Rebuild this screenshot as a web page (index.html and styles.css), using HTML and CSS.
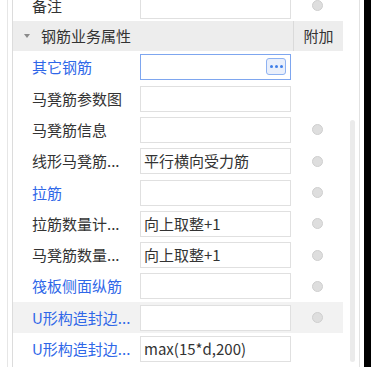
FILE: index.html
```html
<!DOCTYPE html>
<html lang="zh-CN">
<head>
    <meta charset="UTF-8">
    <title>钢筋业务属性</title>
    <link rel="stylesheet" href="styles.css">
</head>
<body>
    <div class="window">
        <div class="outer">
            <div class="grid">
                <div class="row">
                    <div class="label">备注</div>
                    <div class="box"></div>
                    <div class="extra"><span class="radio"></span></div>
                </div>
                <div class="head">
                    <div class="head-title"><span class="caret"></span>钢筋业务属性</div>
                    <div class="head-extra">附加</div>
                </div>
                <div class="row">
                    <div class="label blue">其它钢筋</div>
                    <div class="box active"><span class="more"><i></i><i></i><i></i></span></div>
                    <div class="extra"></div>
                </div>
                <div class="row">
                    <div class="label">马凳筋参数图</div>
                    <div class="box"></div>
                    <div class="extra"></div>
                </div>
                <div class="row">
                    <div class="label">马凳筋信息</div>
                    <div class="box"></div>
                    <div class="extra"><span class="radio"></span></div>
                </div>
                <div class="row">
                    <div class="label">线形马凳筋...</div>
                    <div class="box">平行横向受力筋</div>
                    <div class="extra"><span class="radio"></span></div>
                </div>
                <div class="row">
                    <div class="label blue">拉筋</div>
                    <div class="box"></div>
                    <div class="extra"><span class="radio"></span></div>
                </div>
                <div class="row">
                    <div class="label">拉筋数量计...</div>
                    <div class="box">向上取整+1</div>
                    <div class="extra"><span class="radio"></span></div>
                </div>
                <div class="row">
                    <div class="label">马凳筋数量...</div>
                    <div class="box">向上取整+1</div>
                    <div class="extra"><span class="radio"></span></div>
                </div>
                <div class="row">
                    <div class="label blue">筏板侧面纵筋</div>
                    <div class="box"></div>
                    <div class="extra"><span class="radio"></span></div>
                </div>
                <div class="row hover">
                    <div class="label blue">U形构造封边...</div>
                    <div class="box"></div>
                    <div class="extra"><span class="radio"></span></div>
                </div>
                <div class="row">
                    <div class="label blue">U形构造封边...</div>
                    <div class="box">max(15*d,200)</div>
                    <div class="extra"></div>
                </div>
            </div>
            <div class="scroll"><div class="thumb"></div></div>
        </div>
        <div class="edge"></div>
    </div>
</body>
</html>
```

FILE: styles.css
```css
body {
    margin: 0;
    background: #fff;
    font-family: "Noto Sans CJK SC", "Liberation Sans", sans-serif;
    font-size: 15px;
    color: #333;
}
.window {
    display: flex;
    width: 371px;
    height: 367px;
    overflow: hidden;
}
.outer {
    display: flex;
    margin-left: 7px;
    padding-left: 4px;
    border-left: 1px solid #e6e6e6;
    border-right: 1px solid #e2e2e2;
    width: 347px;
    margin-right: 4px;
}
.grid {
    width: 330px;
    border-left: 1px solid #dcdcdc;
    margin-top: -10.3px;
    flex-shrink: 0;
}
.row {
    display: grid;
    grid-template-columns: 127px 151px 52px;
    align-items: center;
    height: 31.33px;
    box-sizing: border-box;
    padding-top: 1px;
}
.row.hover {
    background: #f2f2f2;
}
.label {
    padding-left: 19px;
    white-space: nowrap;
    line-height: 20px;
}
.label.blue {
    color: #2f67e8;
}
.box {
    position: relative;
    height: 26px;
    box-sizing: border-box;
    border: 1px solid #e0e0e0;
    background: #fff;
    padding-left: 3px;
    line-height: 24px;
    white-space: nowrap;
}
.box.active {
    border-color: #7ea6ef;
}
.more {
    position: absolute;
    right: 4px;
    top: 3px;
    width: 20px;
    height: 17px;
    box-sizing: border-box;
    border: 1px solid #8eb2f2;
    border-radius: 3px;
    background: #e9effb;
    display: flex;
    justify-content: center;
    align-items: center;
    gap: 2px;
}
.more i {
    width: 3px;
    height: 3px;
    border-radius: 50%;
    background: #3f7ee8;
}
.extra {
    display: flex;
    justify-content: center;
}
.radio {
    width: 9px;
    height: 9px;
    border-radius: 50%;
    background: #dedede;
    border: 1px solid #cfcfcf;
}
.head {
    display: flex;
    height: 30px;
    background: #ededed;
    line-height: 30px;
}
.head-title {
    width: 280px;
    display: flex;
    align-items: center;
}
.caret {
    margin-left: 11px;
    margin-right: 11px;
    width: 0;
    height: 0;
    border-left: 3px solid transparent;
    border-right: 3px solid transparent;
    border-top: 4px solid #8a8a8a;
}
.head-extra {
    width: 49px;
    border-left: 1px solid #dadada;
    text-align: center;
}
.scroll {
    flex: 1;
    padding-left: 7px;
    padding-top: 120px;
}
.thumb {
    width: 5px;
    height: 242px;
    border-radius: 3px;
    background: #ebebeb;
}
.edge {
    flex: 1;
    background: #000;
}
```
